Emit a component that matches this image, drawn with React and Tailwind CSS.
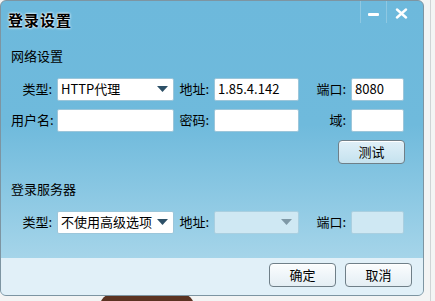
export default function App() {
  const font = { fontFamily: '"Microsoft YaHei", "Noto Sans CJK SC", "Noto Sans", sans-serif' };
  return (
    <div className="relative w-[435px] h-[301px] bg-[#f3f4f4] overflow-hidden text-[12px] text-black" style={font}>
      {/* stuff behind the dialog */}
      <div className="absolute left-[100px] top-[294px] w-[94px] h-[12px] rounded-t-[20px] bg-[#5b3322]" />
      <div className="absolute left-[430px] top-0 w-px h-[301px] bg-[#cfd3d5]" />

      <div className="absolute left-0 top-0 w-[424px] h-[296px] rounded-[6px] border border-[#7d95a2] overflow-hidden flex flex-col bg-[linear-gradient(to_bottom,#6db9dc_0%,#6fbadc_42%,#b4dced_100%)]">
        {/* title bar */}
        <div className="h-[40px] flex items-start justify-between">
          <div className="pl-[7px] pt-[8px] text-[15px] font-bold tracking-[1px] [text-shadow:0_0_2px_#fff,0_0_3px_#fff]">登录设置</div>
          <div className="flex mr-[8px] h-[22px]">
            <div className="w-[26px] border-l border-[#8ec8e2] flex items-center justify-center pt-[4px]">
              <div className="w-[11px] h-[3px] bg-white rounded-[1px]" />
            </div>
            <div className="w-[29px] border-l border-[#8ec8e2] flex items-start justify-center pt-[7px]">
              <svg width="13" height="11" viewBox="0 0 13 11">
                <path d="M2 1.5 L11 9.5 M11 1.5 L2 9.5" stroke="#fff" strokeWidth="2.4" strokeLinecap="round" />
              </svg>
            </div>
          </div>
        </div>

        {/* body */}
        <div className="flex-1 flex flex-col pl-[10px]">
          <div className="text-[13px] leading-[16px] mt-[7px]">网络设置</div>
          <div className="flex items-center h-[22px] mt-[14px]">
            <Label w="w-[46px]">类型:</Label>
            <Select text="HTTP代理" />
            <Label w="w-[40px]">地址:</Label>
            <Input value="1.85.4.142" w="w-[85px]" />
            <Label w="w-[52px]">端口:</Label>
            <Input value="8080" w="w-[53px]" />
          </div>
          <div className="flex items-center h-[22px] mt-[9px]">
            <Label w="w-[46px]">用户名:</Label>
            <Input value="" w="w-[117px]" />
            <Label w="w-[40px]">密码:</Label>
            <Input value="" w="w-[85px]" />
            <Label w="w-[52px]">域:</Label>
            <Input value="" w="w-[53px]" />
          </div>
          <div className="flex justify-end pr-[18px] mt-[9px]">
            <Button w="w-[67px]">测试</Button>
          </div>
          <div className="text-[13px] leading-[16px] mt-[17px]">登录服务器</div>
          <div className="flex items-center h-[22px] mt-[14px]">
            <Label w="w-[46px]">类型:</Label>
            <Select text="不使用高级选项" />
            <Label w="w-[40px]">地址:</Label>
            <div className="w-[85px] h-[23px] rounded-[2px] border border-[#a9cfe0] bg-[#cfe8f3] flex items-center justify-end pr-[6px]">
              <Arrow color="#7f98a6" />
            </div>
            <Label w="w-[52px]">端口:</Label>
            <div className="w-[53px] h-[23px] rounded-[2px] border border-[#a9cfe0] bg-[#cfe8f3]" />
          </div>
        </div>

        {/* footer */}
        <div className="h-[37px] bg-[#e1f0f8] flex items-start justify-end gap-[9px] pt-[5px] pr-[11px]">
          <Button w="w-[67px]" light>确定</Button>
          <Button w="w-[67px]" light>取消</Button>
        </div>
      </div>
    </div>
  );
}

function Label({ w, children }) {
  return <div className={`${w} text-right pr-[5px] text-[13px] whitespace-nowrap shrink-0`}>{children}</div>;
}

function Input({ value, w }) {
  return (
    <div className={`${w} h-[23px] rounded-[2px] border border-[#9cc6da] bg-white flex items-center px-[3px] text-[13px] shrink-0`}>
      {value}
    </div>
  );
}

function Arrow({ color }) {
  return (
    <svg width="11" height="6" viewBox="0 0 11 6">
      <path d="M0 0 H11 L5.5 6 Z" fill={color} />
    </svg>
  );
}

function Select({ text }) {
  return (
    <div className="w-[117px] h-[23px] rounded-[2px] border border-[#9cc6da] bg-white flex items-center justify-between pl-[3px] pr-[5px] text-[13px] shrink-0">
      <span>{text}</span>
      <Arrow color="#2d5067" />
    </div>
  );
}

function Button({ w, light, children }) {
  return (
    <div
      className={`${w} h-[24px] rounded-[4px] border border-[#6f7f88] flex items-center justify-center text-[13px] shadow-[inset_0_1px_0_#fff] ${
        light ? "bg-[linear-gradient(to_bottom,#fbfdfe,#e4eef4)]" : "bg-[linear-gradient(to_bottom,#e0f0f8,#c5e2ef)]"
      }`}
    >
      {children}
    </div>
  );
}
